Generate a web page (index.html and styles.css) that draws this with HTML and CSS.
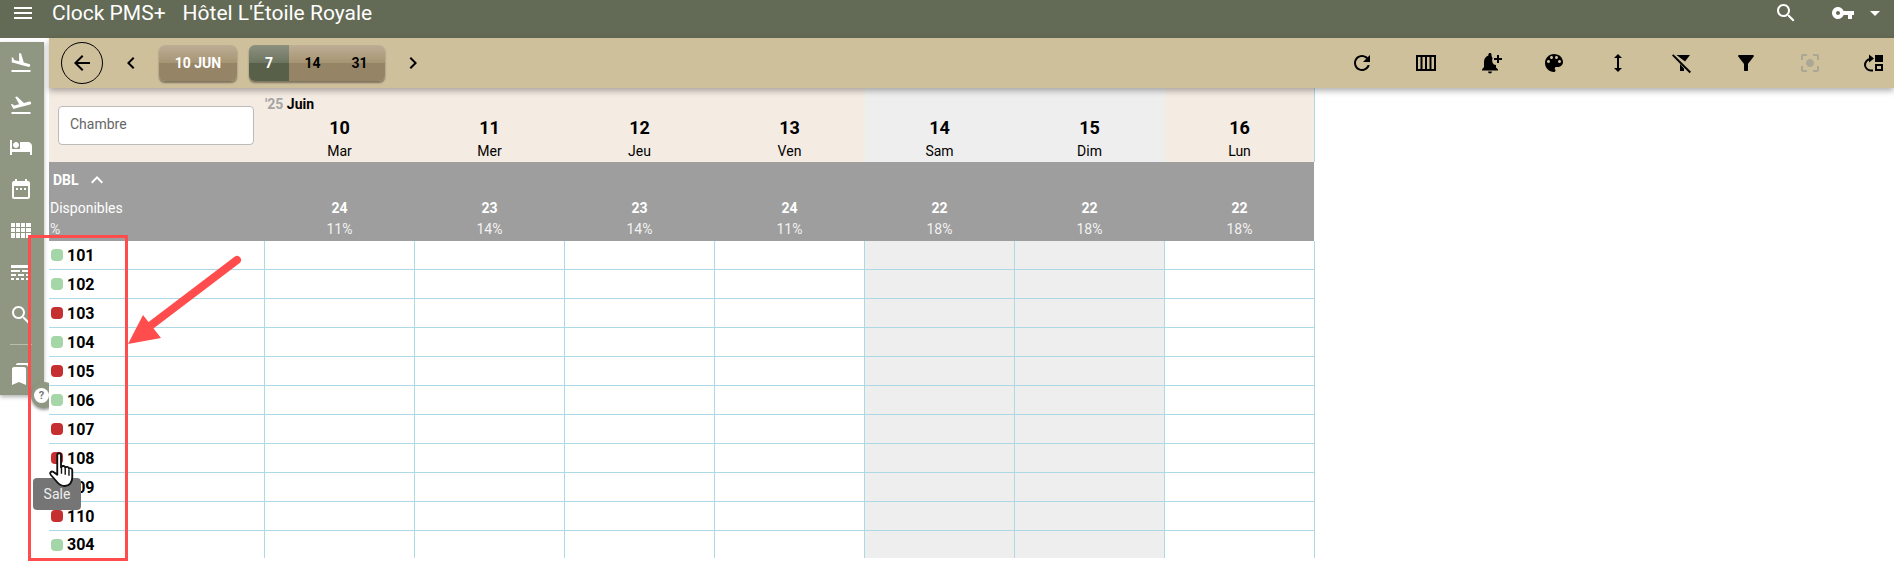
FILE: index.html
```html
<!DOCTYPE html>
<html lang="fr">
<head>
    <meta charset="UTF-8">
    <meta name="viewport" content="width=device-width, initial-scale=1.0">
    <title>Clock PMS+</title>
    <link rel="stylesheet" href="styles.css">
</head>
<body>
    <header class="topbar">
        <svg class="icon menu-icon" viewBox="0 0 24 24"><path d="M3 18h18v-2H3v2zm0-5h18v-2H3v2zm0-7v2h18V6H3z"/></svg>
        <span class="app-name">Clock PMS+</span>
        <span class="hotel-name">Hôtel L'Étoile Royale</span>
        <div class="topbar-right">
            <svg class="icon" viewBox="0 0 24 24"><path d="M15.5 14h-.79l-.28-.27C15.41 12.59 16 11.11 16 9.5 16 5.91 13.09 3 9.5 3S3 5.91 3 9.5 5.91 16 9.5 16c1.61 0 3.09-.59 4.23-1.57l.27.28v.79l5 4.99L20.49 19l-4.99-5zm-6 0C7.01 14 5 11.99 5 9.5S7.01 5 9.5 5 14 7.01 14 9.5 11.99 14 9.5 14z"/></svg>
            <svg class="icon key-icon" viewBox="0 0 24 24"><path d="M12.65 10C11.83 7.67 9.61 6 7 6c-3.31 0-6 2.69-6 6s2.69 6 6 6c2.61 0 4.83-1.67 5.65-4H17v4h4v-4h2v-4H12.65zM7 14c-1.1 0-2-.9-2-2s.9-2 2-2 2 .9 2 2-.9 2-2 2z"/></svg>
            <svg class="icon drop-icon" viewBox="0 0 24 24"><path d="M7 10l5 5 5-5z"/></svg>
        </div>
    </header>

    <div class="toolbar">
        <button class="back-btn">
            <svg class="icon" viewBox="0 0 24 24"><path d="M20 11H7.83l5.59-5.59L12 4l-8 8 8 8 1.41-1.41L7.83 13H20v-2z"/></svg>
        </button>
        <svg class="icon chevron prev" viewBox="0 0 24 24"><path d="M15.41 7.41L14 6l-6 6 6 6 1.41-1.41L10.83 12z"/></svg>
        <button class="date-btn">10 JUN</button>
        <div class="range-group">
            <span class="range active">7</span>
            <span class="range">14</span>
            <span class="range">31</span>
        </div>
        <svg class="icon chevron next" viewBox="0 0 24 24"><path d="M10 6L8.59 7.41 13.17 12l-4.58 4.59L10 18l6-6z"/></svg>

        <div class="tools">
            <svg class="icon" viewBox="0 0 24 24"><path d="M17.65 6.35C16.2 4.9 14.21 4 12 4c-4.42 0-7.99 3.58-7.99 8s3.57 8 7.99 8c3.73 0 6.84-2.55 7.73-6h-2.08c-.82 2.33-3.04 4-5.65 4-3.31 0-6-2.69-6-6s2.69-6 6-6c1.66 0 3.14.69 4.22 1.78L13 11h7V4l-2.35 2.35z"/></svg>
            <svg class="icon" viewBox="0 0 24 24"><path d="M2 4h20v16H2V4zm2 2v12h2.500V6H4zm4.500 0v12H11V6H8.500zM13 6v12h2.500V6H13zm4.500 0v12H20V6h-2.500z" fill-rule="evenodd"/></svg>
            <svg class="icon" viewBox="0 0 24 24"><path d="M12 2c-1 0-1.600.7-1.600 1.500v1C7.500 5.500 6 8 6 11v5l-2 2.500v1h16v-1l-2-2V14c-3 0-4.500-3-3.500-7l-1-2V3.500C13.500 2.700 13 2 12 2z"/><path d="M10 20.500h4a2 2 0 0 1-4 0z"/><path d="M19 4h2v3h3v2h-3v3h-2V9h-3V7h3z"/></svg>
            <svg class="icon" viewBox="0 0 24 24"><path d="M12 3c-4.970 0-9 4.030-9 9s4.030 9 9 9c.83 0 1.500-.67 1.500-1.500 0-.39-.15-.74-.39-1.010-.23-.26-.38-.61-.38-.99 0-.83.67-1.500 1.500-1.500H16c2.760 0 5-2.240 5-5 0-4.420-4.030-8-9-8zm-5.500 9c-.83 0-1.500-.67-1.500-1.500S5.670 9 6.500 9 8 9.670 8 10.500 7.330 12 6.500 12zm3-4C8.670 8 8 7.330 8 6.500S8.670 5 9.500 5s1.500.67 1.500 1.500S10.330 8 9.500 8zm5 0c-.83 0-1.500-.67-1.500-1.500S13.670 5 14.500 5s1.500.67 1.500 1.500S15.330 8 14.500 8zm3 4c-.83 0-1.500-.67-1.500-1.500S16.670 9 17.500 9s1.500.67 1.500 1.500-.67 1.500-1.500 1.500z"/></svg>
            <svg class="icon" viewBox="0 0 24 24"><path d="M13 6.990h3L12 3 8 6.990h3v10.020H8L12 21l4-3.990h-3z"/></svg>
            <svg class="icon" viewBox="0 0 24 24"><path d="M6.500 4H20l-5 6.500zM4.500 6.500 10 13v7h4v-2.500z"/><path d="M3.400 3.200 2 4.600 19.600 22.200 21 20.800z"/></svg>
            <svg class="icon" viewBox="0 0 24 24"><path d="M4.250 5.610C6.270 8.200 10 13 10 13v6c0 .55.45 1 1 1h2c.55 0 1-.45 1-1v-6s3.720-4.800 5.740-7.390c.51-.66.04-1.610-.79-1.610H5.040c-.83 0-1.300.95-.79 1.610z"/></svg>
            <svg class="icon disabled" viewBox="0 0 24 24"><path d="M12 8c-2.210 0-4 1.790-4 4s1.790 4 4 4 4-1.790 4-4-1.790-4-4-4zm-7 7H3v4c0 1.100.9 2 2 2h4v-2H5v-4zM5 5h4V3H5c-1.100 0-2 .9-2 2v4h2V5zm14-2h-4v2h4v4h2V5c0-1.100-.9-2-2-2zm0 16h-4v2h4c1.100 0 2-.9 2-2v-4h-2v4z"/></svg>
            <svg class="icon" viewBox="0 0 24 24"><path d="M13 4h8v7h-8zM13 13h8v7h-8zm2 2v3h4v-3z" fill-rule="evenodd"/><path d="M11 19.500H9C5.800 19.500 3 17 3 14c0-3 2.500-6 5.500-6" fill="none" stroke="currentColor" stroke-width="2"/><path d="M7 3.500 12 7.500 7 11.500z"/></svg>
        </div>
    </div>

    <div class="main">
        <nav class="rail">
            <svg class="icon" viewBox="0 0 24 24"><path d="M2.500 19h19v2h-19zm7.180-5.730l4.350 1.160 5.310 1.420c.8.21 1.620-.26 1.840-1.060.21-.8-.26-1.620-1.060-1.840l-5.310-1.420-2.760-9.020L10.120 2v8.280L5.150 8.950l-.93-2.320-1.450-.39v5.170l1.600.43 5.310 1.430z"/></svg>
            <svg class="icon" viewBox="0 0 24 24"><path d="M2.500 19h19v2h-19zm19.570-9.360c-.21-.8-1.040-1.280-1.840-1.060L14.920 10l-6.900-6.430-1.930.51 4.140 7.170-4.970 1.330-1.970-1.540-1.450.39 1.820 3.160.77 1.330 1.600-.43 5.310-1.420 4.350-1.160L21 11.490c.81-.23 1.280-1.050 1.070-1.850z"/></svg>
            <svg class="icon" viewBox="0 0 24 24"><path d="M7 13c1.660 0 3-1.340 3-3S8.660 7 7 7s-3 1.340-3 3 1.340 3 3 3zm12-6h-8v7H3V5H1v15h2v-3h18v3h2v-9c0-2.210-1.790-4-4-4z"/></svg>
            <svg class="icon" viewBox="0 0 24 24"><path d="M9 11H7v2h2v-2zm4 0h-2v2h2v-2zm4 0h-2v2h2v-2zm2-7h-1V2h-2v2H8V2H6v2H5c-1.110 0-1.990.9-1.990 2L3 20c0 1.100.89 2 2 2h14c1.100 0 2-.9 2-2V6c0-1.100-.9-2-2-2zm0 16H5V9h14v11z"/></svg>
            <svg class="icon" viewBox="0 0 24 24"><path d="M2 4h4v4H2zM7 4h4v4H7zM12 4h4v4h-4zM17 4h5v4h-5zM2 9h4v4H2zM7 9h4v4H7zM12 9h4v4h-4zM17 9h5v4h-5zM2 14h4v5H2zM7 14h4v5H7zM12 14h4v5h-4zM17 14h5v5h-5z"/></svg>
            <svg class="icon" viewBox="0 0 24 24"><path d="M2 4h20v3H2zM2 9h9v2H2zM13 9h9v2h-9zM2 13h5v2H2zM9 13h6v2H9zM17 13h5v2h-5zM2 17h3v2H2zM7 17h3v2H7zM12 17h3v2h-3zM17 17h2v2h-2zM20 17h2v2h-2z"/></svg>
            <svg class="icon" viewBox="0 0 24 24"><path d="M15.500 14h-.79l-.28-.27C15.410 12.590 16 11.110 16 9.500 16 5.910 13.090 3 9.500 3S3 5.910 3 9.500 5.910 16 9.500 16c1.610 0 3.090-.59 4.230-1.570l.27.28v.79l5 4.990L20.490 19l-4.990-5zm-6 0C7.010 14 5 11.990 5 9.500S7.010 5 9.500 5 14 7.010 14 9.500 11.990 14 9.500 14z"/></svg>
            <span class="rail-divider"></span>
            <svg class="icon" viewBox="0 0 24 24"><path d="M19 18l2 1V3c0-1.100-.9-2-2-2H8.990C7.890 1 7 1.900 7 3h10c1.100 0 2 .9 2 2v13zM15 5H5c-1.100 0-2 .9-2 2v16l7-3 7 3V7c0-1.100-.9-2-2-2z"/></svg>
        </nav>
        <div class="help-bubble"><span>?</span></div>

        <div class="planning">
            <div class="row head-row">
                <div class="room-search"><div class="search-box">Chambre</div></div>
                <div class="day first"><span class="month"><em>'25</em> Juin</span><b>10</b><span>Mar</span></div>
                <div class="day"><b>11</b><span>Mer</span></div>
                <div class="day"><b>12</b><span>Jeu</span></div>
                <div class="day"><b>13</b><span>Ven</span></div>
                <div class="day weekend"><b>14</b><span>Sam</span></div>
                <div class="day weekend"><b>15</b><span>Dim</span></div>
                <div class="day last"><b>16</b><span>Lun</span></div>
            </div>

            <div class="type-block">
                <div class="type-name">DBL
                    <svg class="icon" viewBox="0 0 24 24"><path d="M12 8l-6 6 1.410 1.410L12 10.830l4.590 4.580L18 14z"/></svg>
                </div>
                <div class="row stat-row avail">
                    <div class="stat-label">Disponibles</div>
                    <div>24</div><div>23</div><div>23</div><div>24</div><div>22</div><div>22</div><div>22</div>
                </div>
                <div class="row stat-row pct">
                    <div class="stat-label">%</div>
                    <div>11%</div><div>14%</div><div>14%</div><div>11%</div><div>18%</div><div>18%</div><div>18%</div>
                </div>
            </div>

            <div class="row room-row">
                <div class="room"><i class="dot free"></i>101</div>
                <div></div><div></div><div></div><div></div><div class="we"></div><div class="we"></div><div></div>
            </div>
            <div class="row room-row">
                <div class="room"><i class="dot free"></i>102</div>
                <div></div><div></div><div></div><div></div><div class="we"></div><div class="we"></div><div></div>
            </div>
            <div class="row room-row">
                <div class="room"><i class="dot dirty"></i>103</div>
                <div></div><div></div><div></div><div></div><div class="we"></div><div class="we"></div><div></div>
            </div>
            <div class="row room-row">
                <div class="room"><i class="dot free"></i>104</div>
                <div></div><div></div><div></div><div></div><div class="we"></div><div class="we"></div><div></div>
            </div>
            <div class="row room-row">
                <div class="room"><i class="dot dirty"></i>105</div>
                <div></div><div></div><div></div><div></div><div class="we"></div><div class="we"></div><div></div>
            </div>
            <div class="row room-row">
                <div class="room"><i class="dot free"></i>106</div>
                <div></div><div></div><div></div><div></div><div class="we"></div><div class="we"></div><div></div>
            </div>
            <div class="row room-row">
                <div class="room"><i class="dot dirty"></i>107</div>
                <div></div><div></div><div></div><div></div><div class="we"></div><div class="we"></div><div></div>
            </div>
            <div class="row room-row">
                <div class="room"><i class="dot dirty"></i>108</div>
                <div></div><div></div><div></div><div></div><div class="we"></div><div class="we"></div><div></div>
            </div>
            <div class="row room-row">
                <div class="room"><i class="dot dirty"></i>109</div>
                <div></div><div></div><div></div><div></div><div class="we"></div><div class="we"></div><div></div>
            </div>
            <div class="row room-row">
                <div class="room"><i class="dot dirty"></i>110</div>
                <div></div><div></div><div></div><div></div><div class="we"></div><div class="we"></div><div></div>
            </div>
            <div class="row room-row last-room">
                <div class="room"><i class="dot free"></i>304</div>
                <div></div><div></div><div></div><div></div><div class="we"></div><div class="we"></div><div></div>
            </div>
        </div>
    </div>

    <!-- annotation drawn over the screen -->
    <div class="tooltip">Sale</div>
    <svg class="hand" viewBox="0 0 32 40">
        <path d="M12 3c0-2.500 4-2.500 4 0v13l.5-.5c1-1.500 4-1 4 1 1-1.500 4-1 4 1 1-1 3.500-.5 3.500 1.500v8c0 5-3 9-8 9-4 0-6-1.500-8-4L5 24c-1.500-2 .5-4.500 3-3l4 3z" fill="#fff" stroke="#111" stroke-width="2" stroke-linejoin="round"/>
        <path d="M16.500 16v7M20.500 17v7M24.500 18.500V25" fill="none" stroke="#111" stroke-width="1.500"/>
    </svg>
    <div class="mark-box"></div>
    <svg class="mark-arrow" viewBox="0 0 130 100">
        <path d="M109 10 22 76" fill="none" stroke="#ff4d4d" stroke-width="8" stroke-linecap="round"/>
        <path d="M0 94 15 65 33 88z" fill="#ff4d4d"/>
    </svg>
</body>
</html>
```

FILE: styles.css
```css
html, body {
    height: 562px;
    overflow: hidden;
}
body {
    margin: 0;
    position: relative;
    font-family: Roboto, "Liberation Sans", sans-serif;
    font-size: 14px;
    color: #000;
    background: #fff;
}
.icon {
    width: 24px;
    height: 24px;
    display: block;
    fill: currentColor;
    flex: none;
}

/* top bar */
.topbar {
    height: 38px;
    background: #636a55;
    color: #fff;
    display: flex;
    align-items: center;
    padding: 0 7px 12px 11px;
    box-sizing: border-box;
    font-size: 21px;
}
.menu-icon {
    margin-right: 17px;
}
.app-name {
    margin-right: 17px;
}
.topbar-right {
    margin-left: auto;
    display: flex;
    align-items: center;
}
.key-icon {
    margin-left: 33px;
}
.drop-icon {
    margin-left: 8px;
}

/* toolbar */
.toolbar {
    height: 50px;
    margin-left: 49px;
    background: #cfc09c;
    display: flex;
    align-items: center;
    padding: 0 8px 0 12px;
    box-shadow: 0 3px 6px rgba(0,0,0,0.3);
    position: relative;
    z-index: 2;
}
.back-btn {
    width: 42px;
    height: 42px;
    border: 1px solid #000;
    border-radius: 50%;
    background: none;
    padding: 0;
    display: flex;
    align-items: center;
    justify-content: center;
    color: #000;
}
.chevron.prev {
    margin-left: 16px;
}
.date-btn, .range-group {
    height: 36px;
    border: 0;
    border-radius: 6px;
    padding: 0;
    font: 700 14px Roboto, "Liberation Sans", sans-serif;
    background: linear-gradient(#bdae95, #a69473 50%, #968466 50%, #968466);
    box-shadow: 0 2px 2px rgba(0,0,0,0.4);
}
.date-btn {
    width: 78px;
    margin-left: 16px;
    color: #fff;
}
.range-group {
    width: 136px;
    margin-left: 12px;
    display: flex;
    overflow: hidden;
}
.range {
    width: 47px;
    display: flex;
    align-items: center;
    justify-content: center;
}
.range.active {
    width: 40px;
    color: #fff;
    background: linear-gradient(#8b917e, #6d7460 50%, #596049 50%, #596049);
}
.chevron.next {
    margin-left: 16px;
}
.tools {
    margin-left: auto;
    display: flex;
    gap: 40px;
}
.tools .disabled {
    color: #aca695;
}

/* left rail */
.main {
    display: flex;
    position: relative;
}
.rail {
    position: absolute;
    left: 0;
    top: -46px;
    width: 44px;
    height: 353px;
    box-sizing: border-box;
    padding: 9px 3px 0 0;
    background: #8f9682;
    color: #fff;
    display: flex;
    flex-direction: column;
    align-items: center;
    gap: 18px;
    box-shadow: 0 2px 4px rgba(0,0,0,0.3);
}
.rail-divider {
    width: 22px;
    height: 1px;
    background: #b9bdae;
    margin: -1px 0;
}
.help-bubble {
    position: absolute;
    left: 31px;
    top: 294px;
    width: 26px;
    height: 26px;
    box-sizing: border-box;
    padding-left: 3px;
    border-radius: 50%;
    background: #8f9682;
    box-shadow: 0 2px 3px rgba(0,0,0,0.4);
    display: flex;
    align-items: center;
}
.help-bubble span {
    width: 15px;
    height: 15px;
    border-radius: 50%;
    background: #fff;
    color: #777;
    font-size: 11px;
    font-weight: 700;
    line-height: 15px;
    text-align: center;
}

/* planning grid */
.planning {
    margin-left: 49px;
    width: 1266px;
    position: relative;
    background: #fff;
}
.row {
    display: grid;
    grid-template-columns: 216px repeat(7, 150px);
}
.head-row {
    height: 74px;
    background: #f4ebe2;
}
.room-search {
    padding: 18px 0 0 9px;
}
.search-box {
    width: 196px;
    height: 39px;
    box-sizing: border-box;
    background: #fff;
    border: 1px solid #bbb;
    border-radius: 4px;
    padding-left: 11px;
    line-height: 35px;
    font-size: 14px;
    color: #666;
}
.day {
    display: flex;
    flex-direction: column;
    align-items: center;
    justify-content: flex-end;
    padding: 0 1px 1px 0;
    position: relative;
    line-height: 20px;
}
.day b {
    font-size: 18px;
    line-height: 24px;
    margin-bottom: 1px;
}
.day.weekend {
    background: #eeeeee;
}
.day.last {
    padding-right: 0;
    border-right: 1px solid #add8e6;
}
.month {
    position: absolute;
    left: 0;
    top: 8px;
    font-size: 14px;
    font-weight: 700;
    line-height: 16px;
    white-space: nowrap;
}
.month em {
    font-style: normal;
    color: #a5a5a5;
}
.type-block {
    height: 79px;
    width: 1265px;
    background: #9e9e9e;
    color: #fff;
    box-sizing: border-box;
    padding-top: 8px;
}
.type-name {
    display: flex;
    align-items: center;
    height: 20px;
    padding-left: 4px;
    font-size: 14px;
    font-weight: 700;
    margin-bottom: 8px;
}
.type-name .icon {
    margin-left: 6px;
}
.stat-row {
    text-align: center;
    line-height: 21px;
}
.stat-row div {
    padding-right: 1px;
}
.avail div {
    font-weight: 700;
}
.pct {
    color: #f2f2f2;
}
.stat-row .stat-label {
    text-align: left;
    padding-left: 1px;
    font-weight: 400;
}
.room-row {
    height: 29px;
}
.room-row div {
    border-right: 1px solid #add8e6;
    border-bottom: 1px solid #add8e6;
}
.room-row div.we {
    background: #eeeeee;
}
.last-room {
    height: 27px;
}
.last-room div {
    border-bottom: 0;
}
.room-row .room {
    display: flex;
    align-items: center;
    font-size: 16px;
    font-weight: 700;
    padding-left: 2px;
}
.dot {
    width: 12px;
    height: 12px;
    border-radius: 4px;
    margin-right: 4px;
}
.dot.free {
    background: #a5d6a7;
}
.dot.dirty {
    background: #c62f2f;
}

/* overlays */
.tooltip {
    position: absolute;
    left: 33px;
    top: 478px;
    width: 48px;
    height: 32px;
    border-radius: 4px;
    background: #757575;
    color: #eee;
    font-size: 14px;
    line-height: 32px;
    text-align: center;
}
.hand {
    position: absolute;
    left: 46px;
    top: 452px;
    width: 30px;
    height: 38px;
}
.mark-box {
    position: absolute;
    left: 28px;
    top: 235px;
    width: 100px;
    height: 326px;
    box-sizing: border-box;
    border: 3px solid #ff4d4d;
}
.mark-arrow {
    position: absolute;
    left: 128px;
    top: 250px;
    width: 130px;
    height: 100px;
}
```
